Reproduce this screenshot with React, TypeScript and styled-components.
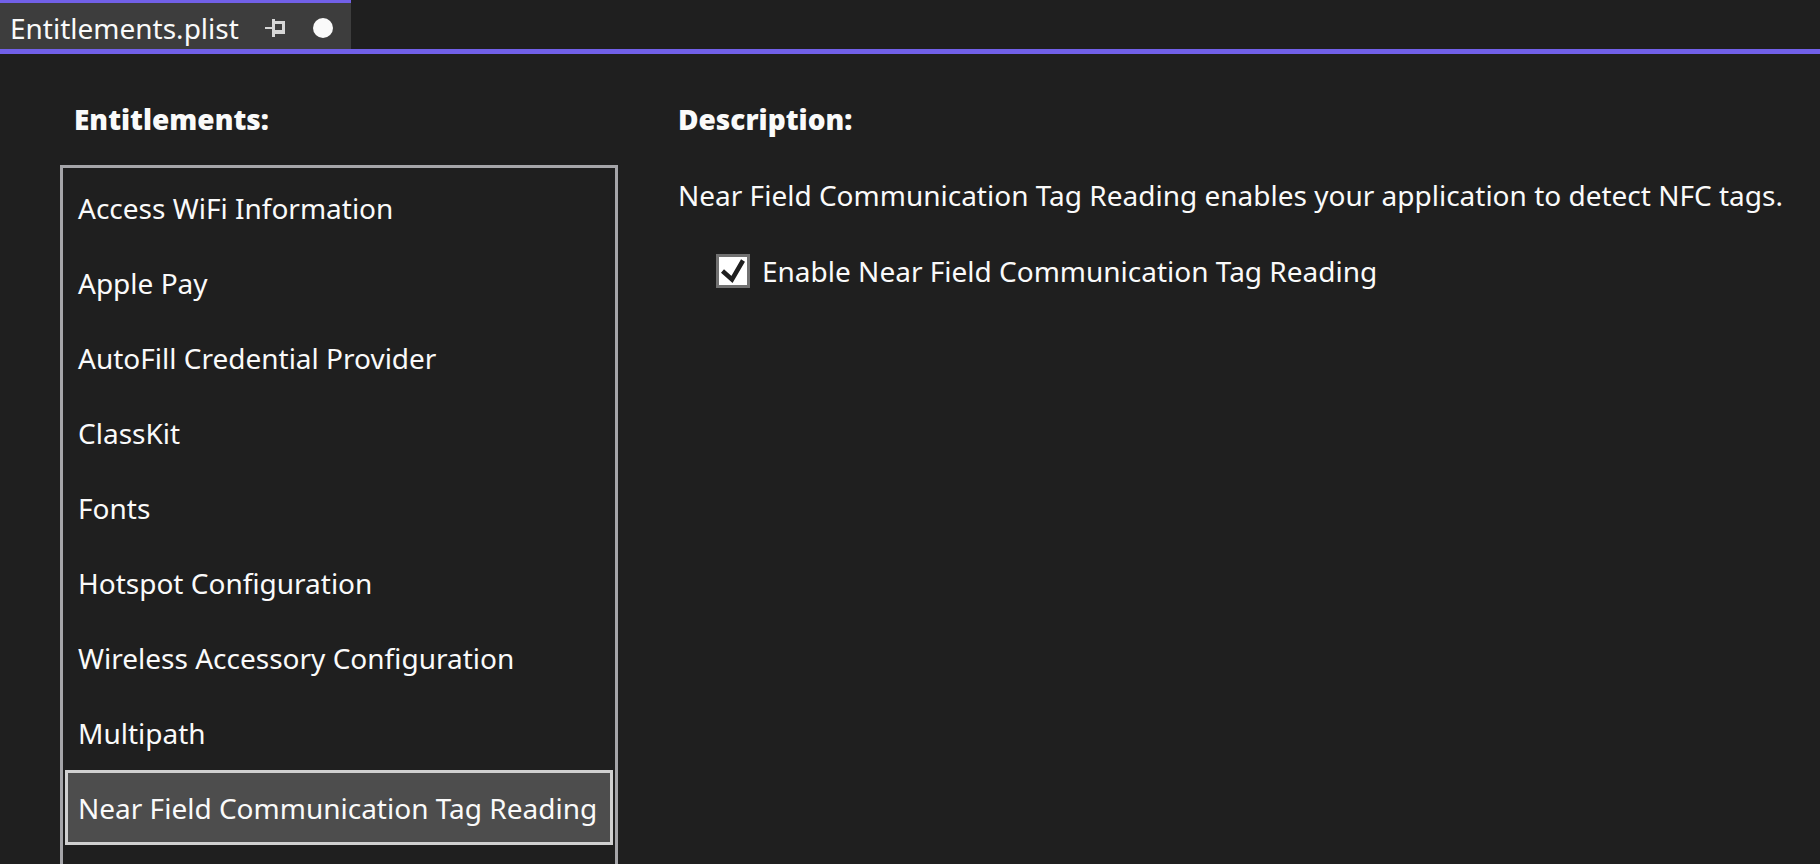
import { useState } from "react";
import styled, { createGlobalStyle } from "styled-components";

const GlobalStyle = createGlobalStyle`
  *, *::before, *::after { box-sizing: border-box; }
  body {
    margin: 0;
    background: #1f1f1f;
    color: #fafafa;
    font-family: "Noto Sans", "Open Sans", sans-serif;
    font-size: 28px;
    line-height: 40px;
  }
`;

const Page = styled.div`
  min-height: 100vh;
  display: flex;
  flex-direction: column;
`;

const TabStrip = styled.header`
  display: flex;
  border-bottom: 5px solid #7160e8;
`;

const Tab = styled.div`
  display: flex;
  align-items: center;
  height: 49px;
  padding: 4px 18px 0 10px;
  border-top: 3px solid #7160e8;
  background: #3d3d3d;
`;

const TabTitle = styled.span`
  margin-right: 26px;
  white-space: nowrap;
`;

const IconButton = styled.button`
  display: flex;
  padding: 0;
  margin-right: 28px;
  border: 0;
  background: none;
  color: #d6d6d6;
  cursor: pointer;
`;

const UnsavedDot = styled.span`
  width: 20px;
  height: 20px;
  border-radius: 50%;
  background: #fafafa;
`;

const Editor = styled.main`
  flex: 1;
  display: flex;
  gap: 60px;
  padding: 46px 20px 0 60px;
`;

const ListPane = styled.section`
  flex: 0 0 558px;
  min-width: 0;
  display: flex;
  flex-direction: column;
`;

const DetailPane = styled.section`
  flex: 1;
  min-width: 0;
`;

const Heading = styled.h2<{ $inset?: boolean }>`
  margin: 0;
  padding-left: ${(p) => (p.$inset ? 14 : 0)}px;
  font-family: "Open Sans", sans-serif;
  font-size: 28px;
  font-weight: 800;
  line-height: 38px;
`;

const List = styled.ul`
  flex: 1;
  margin: 27px 0 0;
  padding: 2px;
  border: 3px solid #a5a5a9;
  border-bottom: 0;
  list-style: none;
`;

const Item = styled.button<{ $selected: boolean }>`
  display: block;
  width: 100%;
  height: 75px;
  padding: 0 10px;
  border: 3px solid ${(p) => (p.$selected ? "#d0d0d0" : "transparent")};
  background: ${(p) => (p.$selected ? "#4d4d4d" : "transparent")};
  color: inherit;
  font: inherit;
  text-align: left;
  white-space: nowrap;
  cursor: pointer;
`;

const Description = styled.p`
  margin: 37px 0 36px;
`;

const CheckLabel = styled.label`
  display: flex;
  align-items: center;
  gap: 12px;
  padding-left: 38px;
`;

const CheckBox = styled.span`
  display: grid;
  flex: none;
  width: 34px;
  height: 34px;

  > * {
    grid-area: 1 / 1;
  }
`;

const CheckInput = styled.input`
  appearance: none;
  width: 34px;
  height: 34px;
  margin: 0;
  border: 3px solid #717171;
  background: #ffffff;

  & + svg {
    visibility: hidden;
    pointer-events: none;
  }
  &:checked + svg {
    visibility: visible;
  }
`;

const entitlements = [
  "Access WiFi Information",
  "Apple Pay",
  "AutoFill Credential Provider",
  "ClassKit",
  "Fonts",
  "Hotspot Configuration",
  "Wireless Accessory Configuration",
  "Multipath",
  "Near Field Communication Tag Reading",
];

export default function App() {
  const [selected, setSelected] = useState(entitlements[8]);
  const [enabled, setEnabled] = useState(true);

  return (
    <Page>
      <GlobalStyle />
      <TabStrip>
        <Tab>
          <TabTitle>Entitlements.plist</TabTitle>
          <IconButton type="button" aria-label="Pin tab">
            <svg width="20" height="18" viewBox="0 0 20 18" fill="currentColor">
              <path d="M0 8h7V0h3v2h10v13H10v3H7v-8H0zM10 5v6h7V5z" fillRule="evenodd" />
            </svg>
          </IconButton>
          <UnsavedDot />
        </Tab>
      </TabStrip>
      <Editor>
        <ListPane>
          <Heading $inset>Entitlements:</Heading>
          <List>
            {entitlements.map((name) => (
              <li key={name}>
                <Item
                  type="button"
                  $selected={name === selected}
                  aria-pressed={name === selected}
                  onClick={() => setSelected(name)}
                >
                  {name}
                </Item>
              </li>
            ))}
          </List>
        </ListPane>
        <DetailPane>
          <Heading>Description:</Heading>
          <Description>
            Near Field Communication Tag Reading enables your application to detect NFC tags.
          </Description>
          <CheckLabel>
            <CheckBox>
              <CheckInput
                type="checkbox"
                checked={enabled}
                onChange={(e) => setEnabled(e.target.checked)}
              />
              <svg width="34" height="34" viewBox="0 0 34 34" fill="none">
                <path d="M6.500 17L16 25.500L27 6.500" stroke="#1f1f1f" strokeWidth="4.500" />
              </svg>
            </CheckBox>
            Enable Near Field Communication Tag Reading
          </CheckLabel>
        </DetailPane>
      </Editor>
    </Page>
  );
}
